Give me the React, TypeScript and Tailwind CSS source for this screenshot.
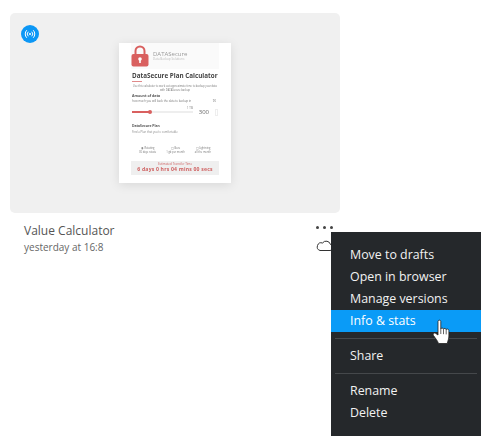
const menuGroups = [
  ['Move to drafts', 'Open in browser', 'Manage versions', 'Info & stats'],
  ['Share'],
  ['Rename', 'Delete'],
]

function Thumbnail() {
  return (
    <div className="w-[112px] h-[140px] bg-white shadow-[0_2px_10px_rgba(0,0,0,0.1)] px-[13px] flex flex-col blur-[0.5px] font-['Open_Sans',sans-serif]">
      <div className="flex items-center gap-[4px] h-[26px] -mx-[1px] bg-[#fafafa]">
        <svg width="18" height="22" viewBox="0 0 18 22" className="shrink-0">
          <path d="M4.500 10V6a4.500 4.500 0 0 1 9 0v4" fill="none" stroke="#d9605f" strokeWidth="2" />
          <rect x="0.500" y="9" width="17" height="12.500" rx="2" fill="#d9605f" />
          <circle cx="9" cy="14" r="1.800" fill="#fff" />
          <rect x="8.200" y="14" width="1.600" height="4" fill="#fff" />
        </svg>
        <div className="flex flex-col leading-none">
          <span className="text-[6px] text-[#999]">DATASecure</span>
          <span className="text-[3px] text-[#bbb] mt-[1px]">Data Backup Solutions</span>
        </div>
      </div>
      <p className="text-[6.3px] font-bold text-[#444] leading-none mt-[4px] whitespace-nowrap">DataSecure Plan Calculator</p>
      <div className="w-[10px] h-px bg-[#e08a8a] mt-[2px] shrink-0" />
      <p className="text-[2.6px] leading-[4px] text-[#777] text-center mt-[2px] whitespace-nowrap">
        Use this calculator to work out approximate time to backup your data<br />with DATASecure backup
      </p>
      <p className="text-[3.6px] font-bold text-[#555] leading-none mt-[2px]">Amount of data</p>
      <div className="flex justify-between text-[2.8px] text-[#777] mt-[2px] leading-none">
        <span>how much you will back the data to backup in</span>
        <span className="mr-[2px]">90</span>
      </div>
      <div className="flex items-center mt-[6px] gap-[6px] h-[7px] shrink-0">
        <div className="flex-1 h-[2px] bg-[#eeeeee] relative">
          <div className="w-[18px] h-[2px] bg-[#d9605f]" />
          <div className="absolute left-[16px] -top-[1px] w-[4px] h-[4px] rounded-full bg-[#d9605f]" />
          <span className="absolute right-0 -top-[4px] text-[2.8px] leading-none text-[#777]">1 TB</span>
        </div>
        <span className="text-[6px] text-[#666] leading-none">300</span>
        <div className="w-[3px] h-[7px] border border-[#eee]" />
      </div>
      <p className="text-[3.4px] font-bold text-[#555] leading-none mt-[8px]">DataSecure Plan</p>
      <p className="text-[2.8px] text-[#888] leading-none mt-[4px]">Find a Plan that you're comfortable</p>
      <div className="flex justify-between text-[2.6px] text-[#777] leading-[4px] mt-[12px] px-[7px] whitespace-nowrap">
        <div className="text-center">◉ Rotating<br />30 days rotate</div>
        <div className="text-center">▢ Bare<br />1 gb per month</div>
        <div className="text-center">▢ Lightning<br />all the month</div>
      </div>
      <div className="mt-[7px] -mx-[1px] h-[14px] shrink-0 bg-[#efefef] flex flex-col items-center text-[#cf6262] leading-none">
        <span className="text-[3px] mt-[2px]">Estimated Transfer Time</span>
        <span className="text-[5.1px] font-bold mt-[1px] tracking-[0.2px] whitespace-nowrap">6 days 0 hrs 04 mins 00 secs</span>
      </div>
    </div>
  )
}

export default function App() {
  return (
    <div className="relative w-[487px] h-[444px] overflow-hidden bg-white pt-[13px] pl-[10px] font-['Open_Sans',sans-serif]">
      <div className="relative w-[330px] h-[200px] rounded-[5px] bg-[#f0f0f0] flex justify-center pt-[30px]">
        <div className="absolute left-[11px] top-[12px] w-[18px] h-[18px] rounded-full bg-[#0c97f5] flex items-center justify-center">
          <svg width="12" height="12" viewBox="0 0 12 12" fill="none" stroke="#fff" strokeWidth="1" strokeLinecap="round">
            <circle cx="6" cy="6" r="1" fill="#fff" stroke="none" />
            <path d="M4 4a2.800 2.800 0 0 0 0 4M8 4a2.800 2.800 0 0 1 0 4" />
            <path d="M2.500 2.500a5 5 0 0 0 0 7M9.500 2.500a5 5 0 0 1 0 7" />
          </svg>
        </div>
        <Thumbnail />
      </div>

      <div className="flex justify-between w-[330px] mt-[9px] pl-[14px] pr-[7px]">
        <div>
          <p className="text-[12px] leading-[17px] text-[#555]">Value Calculator</p>
          <p className="text-[10px] leading-[14px] mt-[1px] text-[#666]">yesterday at 16:8</p>
        </div>
        <div className="flex gap-[4px] mt-[4px]">
          <span className="w-[3px] h-[3px] rounded-full bg-[#444]" />
          <span className="w-[3px] h-[3px] rounded-full bg-[#444]" />
          <span className="w-[3px] h-[3px] rounded-full bg-[#444]" />
        </div>
      </div>

      <svg className="absolute left-[316px] top-[239px]" width="18" height="13" viewBox="0 0 18 13" fill="none" stroke="#333" strokeWidth="1">
        <path d="M4 11.500h10a3 3 0 0 0 .5-6A4.500 4.500 0 0 0 6.500 4 3.800 3.800 0 0 0 4 11.500Z" />
      </svg>

      <div className="absolute left-[331px] top-[232px] w-[150px] h-[204px] bg-[#25282b] pt-[12px] text-[12.4px] text-[#f2f2f2]">
        {menuGroups.map((group, i) => (
          <div key={i}>
            {i > 0 && <div className="h-px bg-[#45484b] mx-[4px] my-[6px]" />}
            {group.map(label => (
              <div key={label} className={`h-[22px] px-[19px] leading-[21px] ${label === 'Info & stats' ? 'bg-[#0a9bf7] text-white' : ''}`}>
                {label}
              </div>
            ))}
          </div>
        ))}
      </div>

      <svg className="absolute left-[432px] top-[319px]" width="21" height="26" viewBox="0 0 21 26">
        <path
          d="M6 2.500c0-1.800 2.800-1.800 2.800 0V10c.2-1.300 2.500-1.300 2.700.2.200-1.100 2.500-1.100 2.700.4.300-1 2.500-.8 2.700 1v5.400c0 3-1 4.500-1.700 7.500H6.500C5.500 21.500 3.500 19.500 1.500 16.500c-1-1.600.5-3.200 2-2.200L6 16Z"
          fill="#fff"
          stroke="#222"
          strokeWidth="0.800"
          strokeLinejoin="round"
        />
        <path d="M8.800 10v5M11.500 10.200v5M14.200 10.600v4.800" stroke="#222" strokeWidth="0.700" fill="none" />
      </svg>
    </div>
  )
}
